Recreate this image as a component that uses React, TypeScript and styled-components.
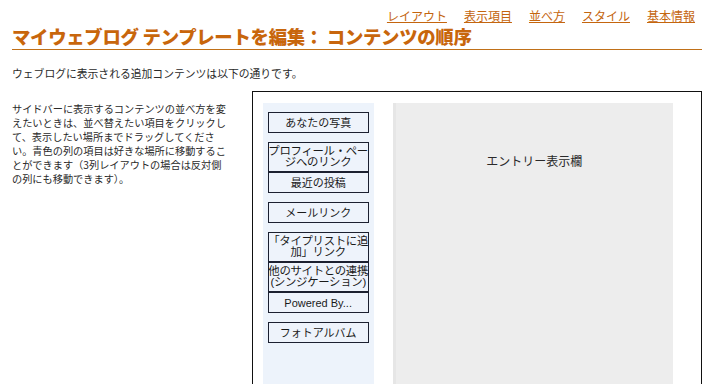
import React from 'react';
import styled, { createGlobalStyle } from 'styled-components';

const GlobalStyle = createGlobalStyle`
  html, body {
    margin: 0;
    padding: 0;
    background: #ffffff;
    overflow: hidden;
  }
  body {
    font-family: "Liberation Sans", "Noto Sans CJK JP", sans-serif;
    color: #333333;
  }
`;

const navLinks = ['レイアウト', '表示項目', '並べ方', 'スタイル', '基本情報'];

const sidebarItems: { label: React.ReactNode; tall?: boolean }[] = [
  { label: 'あなたの写真' },
  {
    label: (
      <>
        プロフィール・ペー
        <br />
        ジへのリンク
      </>
    ),
    tall: true,
  },
  { label: '最近の投稿' },
  { label: 'メールリンク' },
  {
    label: (
      <>
        「タイプリストに追
        <br />
        加」リンク
      </>
    ),
    tall: true,
  },
  {
    label: (
      <>
        他のサイトとの連携
        <br />
        (シンジケーション)
      </>
    ),
    tall: true,
  },
  { label: 'Powered By...' },
  { label: 'フォトアルバム' },
];

const descriptionLines = [
  'サイドバーに表示するコンテンツの並べ方を変',
  'えたいときは、並べ替えたい項目をクリックし',
  'て、表示したい場所までドラッグしてくださ',
  'い。青色の列の項目は好きな場所に移動するこ',
  'とができます（3列レイアウトの場合は反対側',
  'の列にも移動できます）。',
];

export default function App() {
  return (
    <>
      <GlobalStyle />
      <Page>
        <Nav>
          {navLinks.map((link) => (
            <NavLink key={link} href="#">
              {link}
            </NavLink>
          ))}
        </Nav>
        <Title>マイウェブログ テンプレートを編集： コンテンツの順序</Title>
        <Intro>ウェブログに表示される追加コンテンツは以下の通りです。</Intro>

        <Content>
          <Description>
            {descriptionLines.map((line) => (
              <span key={line}>
                {line}
                <br />
              </span>
            ))}
          </Description>

          <Frame>
            <Sidebar>
              {sidebarItems.map((item, i) => (
                <Item key={i} $tall={item.tall}>
                  <ItemLabel $tall={item.tall}>{item.label}</ItemLabel>
                </Item>
              ))}
            </Sidebar>
            <EntryArea>
              <EntryLabel>エントリー表示欄</EntryLabel>
            </EntryArea>
          </Frame>
        </Content>
      </Page>
    </>
  );
}

const Page = styled.div`
  margin-left: 12px;
  width: 690px;
  padding-top: 8px;
`;

const Nav = styled.div`
  display: flex;
  justify-content: flex-end;
  gap: 17px;
  padding-right: 7px;
  height: 16px;
`;

const NavLink = styled.a`
  font-family: "Noto Sans CJK JP", sans-serif;
  font-size: 12px;
  line-height: 16px;
  color: #c4650e;
  text-decoration: underline;
`;

const Title = styled.h1`
  margin: 0;
  padding: 2px 0 3px;
  font-family: "Noto Sans CJK JP", sans-serif;
  font-size: 18.4px;
  line-height: 20px;
  font-weight: 900;
  color: #c8660c;
  border-bottom: 1px solid #c07018;
  letter-spacing: -0.3px;
`;

const Intro = styled.p`
  margin: 16px 0 0;
  font-family: "Noto Sans CJK JP", sans-serif;
  font-size: 10.8px;
  line-height: 14px;
  color: #2a2a2a;
`;

const Content = styled.div`
  display: flex;
  align-items: flex-start;
  margin-top: 11px;
`;

const Description = styled.p`
  margin: 11px 0 0;
  width: 240px;
  font-family: "Noto Sans CJK JP", sans-serif;
  font-size: 10.2px;
  line-height: 14px;
  color: #2a2a2a;
  white-space: nowrap;
`;

const Frame = styled.div`
  display: flex;
  gap: 19px;
  width: 420px;
  height: 282px;
  padding: 11px 19px 0 10px;
  border: 1px solid #111111;
  border-bottom: none;
`;

const Sidebar = styled.div`
  display: flex;
  flex-direction: column;
  align-items: center;
  width: 111px;
  padding-top: 9px;
  background: #edf3fb;
`;

const Item = styled.div<{ $tall?: boolean }>`
  box-sizing: border-box;
  display: flex;
  align-items: center;
  justify-content: center;
  width: 101px;
  height: ${(p) => (p.$tall ? 30 : 21)}px;
  margin-bottom: ${(p) => (p.$tall ? 0 : 9)}px;
  border: 1px solid #1c2030;
  background: #eef3fb;
  overflow: visible;
`;

const ItemLabel = styled.span<{ $tall?: boolean }>`
  font-family: "Liberation Sans", "Noto Sans CJK JP", sans-serif;
  font-size: ${(p) => (p.$tall ? 11.4 : 11)}px;
  line-height: ${(p) => (p.$tall ? 11 : 14)}px;
  color: #1a1a1a;
  text-align: center;
  white-space: nowrap;
  letter-spacing: ${(p) => (p.$tall ? -0.3 : 0)}px;
`;

const EntryArea = styled.div`
  display: flex;
  justify-content: center;
  width: 280px;
  background: #ededed;
  border-left: 3px solid #e6e6e6;
  box-sizing: border-box;
`;

const EntryLabel = styled.span`
  margin-top: 50px;
  font-family: "Noto Sans CJK JP", sans-serif;
  font-size: 12px;
  line-height: 16px;
  color: #2a2a2a;
`;
